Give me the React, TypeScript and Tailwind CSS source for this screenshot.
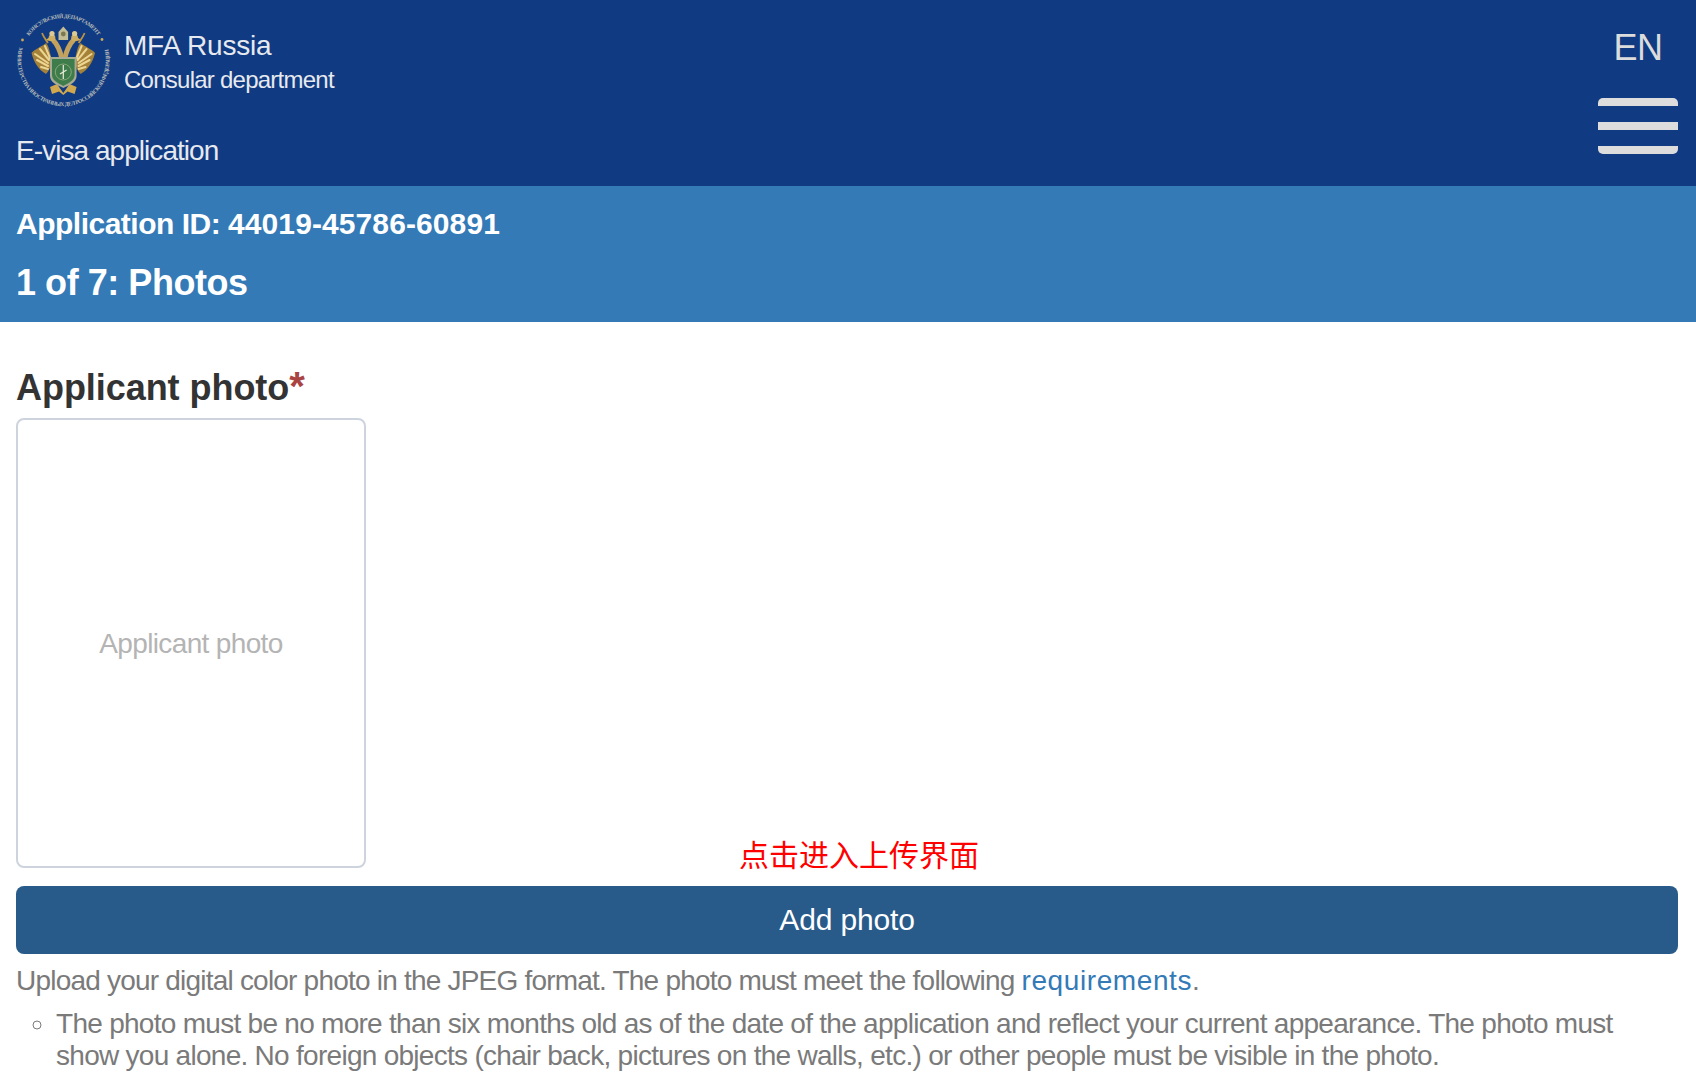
import { useId } from 'react'

const SANS = 'font-["Liberation_Sans","Noto_Sans_CJK_SC",sans-serif]'

// 鹰的左半边，右半边用镜像复用
function EagleHalf() {
  return (
    <g>
      <path d="M37 50 C35 40 34 34 31 31 C26 35 20 37 16.5 41 C19 51 24 58 31 62 C34 59 36 54 37 50 Z" fill="#a5823a" />
      <path d="M35 46 L30 34 M34 48 L25 37 M33 51 L20 42 M33 54 L22 48 M33 57 L26 55" stroke="#ecd592" strokeWidth="2" strokeLinecap="round" fill="none" />
      <path d="M47 47 C45 38 43 33 38 28" stroke="#c2a25c" strokeWidth="5" fill="none" />
      <circle cx="37" cy="26" r="3.4" fill="#cdae62" />
      <path d="M35 25 L30.5 28 L35 29 Z" fill="#cdae62" />
      <circle cx="37" cy="21.5" r="2.6" fill="#ddca92" />
      <path d="M27 21 C29 26 31 28 33 31" stroke="#bd9240" strokeWidth="1.8" fill="none" />
    </g>
  )
}

// 领事司徽章：外圈文字 + 双头鹰 + 绿色盾牌
function Emblem() {
  const id = useId()
  return (
    <svg viewBox="0 0 97 96" className="-ml-px w-[97px] h-[96px] shrink-0">
      <defs>
        <path id={`${id}t`} d="M14.1 23.9 A42 42 0 0 1 82.9 23.9" />
        <path id={`${id}b`} d="M4.3 35.3 A46 46 0 1 0 92.7 35.3" />
      </defs>
      <g fontSize="5.6" fill="#b4bbba" fontFamily="Liberation Serif, serif" fontWeight="700">
        <text>
          <textPath href={`#${id}t`} textLength="80">КОНСУЛЬСКИЙ ДЕПАРТАМЕНТ</textPath>
        </text>
        <text>
          <textPath href={`#${id}b`} textLength="168">МИНИСТЕРСТВА ИНОСТРАННЫХ ДЕЛ РОССИЙСКОЙ ФЕДЕРАЦИИ</textPath>
        </text>
      </g>
      <circle cx="7.5" cy="28" r="1.4" fill="#c9a85c" />
      <circle cx="87" cy="27.5" r="1.4" fill="#c9a85c" />
      <EagleHalf />
      <g transform="matrix(-1 0 0 1 96.6 0)">
        <EagleHalf />
      </g>
      {/* central crown */}
      <path d="M43.5 28 L43.5 20 L48.3 14.5 L53.1 20 L53.1 28 Z" fill="#c3bd95" />
      <circle cx="48.3" cy="22" r="2.4" fill="#7d7752" />
      {/* tail */}
      <path d="M35 75 L42 72 L48.3 81 L54.6 72 L61.6 75 L59.6 82 L52.6 79.5 L48.3 83 L44 79.5 L37 82 Z" fill="#cfa84f" />
      {/* shield */}
      <path d="M35 45 H61.6 V64 C61.6 70 55 73 48.3 76 C41.6 73 35 70 35 64 Z" fill="#a8aa92" />
      <path d="M37 47 H59.6 V63 C59.6 68 54 71 48.3 74 C42.6 71 37 68 37 63 Z" fill="#3f7c4b" />
      <circle cx="48.3" cy="60" r="8" fill="none" stroke="#86a878" strokeWidth="1" />
      <path d="M48.3 53 V67 M45 62 L51.6 58" stroke="#e8ecd8" strokeWidth="1.2" />
    </svg>
  )
}

export default function App() {
  return (
    <div className={`min-h-[1072px] bg-white overflow-hidden ${SANS}`}>
      {/* 顶部导航 */}
      <header className="h-[186px] bg-[#103a81] flex justify-between pl-4 pr-[18px]">
        <div>
          <div className="flex items-center gap-[12px] pt-[12px]">
            <Emblem />
            <div className="pt-[6px] text-[#e6e9ef]">
              <div className="text-[28px] leading-[34px] tracking-[-0.2px]">MFA Russia</div>
              <div className="text-[24px] leading-[34px] tracking-[-0.75px]">Consular department</div>
            </div>
          </div>
          <div className="mt-[27px] text-[28px] leading-[32px] tracking-[-0.95px] text-[#e6e9ef]">E-visa application</div>
        </div>
        <div className="flex flex-col items-center w-[80px]">
          <div className="mt-[28px] text-[36px] leading-[40px] tracking-[-0.5px] text-[#dcdcdc]">EN</div>
          <div className="mt-[30px] w-[80px] flex flex-col gap-[16px]">
            <span className="h-[8px] bg-[#dddddd] rounded-t-[5px]" />
            <span className="h-[8px] bg-[#dddddd]" />
            <span className="h-[8px] bg-[#dddddd] rounded-b-[5px]" />
          </div>
        </div>
      </header>

      {/* 申请编号 / 步骤 */}
      <section className="h-[136px] bg-[#337ab7] px-4 pt-[19px] text-white">
        <div className="text-[30px] leading-[38px] font-bold tracking-[-0.5px]">
          Application ID: <span className="tracking-[0.1px]">44019-45786-60891</span>
        </div>
        <div className="mt-[20px] text-[36px] leading-[40px] font-bold tracking-[-0.46px]">1 of 7: Photos</div>
      </section>

      <main className="pl-4 pr-[18px] relative">
        <h2 className="pt-[46px] text-[36px] leading-[40px] font-bold tracking-[-0.05px] text-[#333333]">
          Applicant photo<span className="text-[40px] leading-[0] text-[#a94442]">*</span>
        </h2>
        <div className="mt-[10px] w-[350px] h-[450px] pt-[2px] border-2 border-[#ced4de] rounded-[8px] flex items-center justify-center text-[28px] text-[#b4b4b4] tracking-[-0.65px]">
          Applicant photo
        </div>
        <span className="absolute left-[739px] top-[514px] text-[30px] leading-[40px] text-[#ff0000]">点击进入上传界面</span>
        <button className="mt-[18px] w-full h-[68px] pb-[2px] rounded-[8px] bg-[#285b8a] text-white text-[30px] tracking-[-0.15px]">Add photo</button>
        <p className="mt-[11px] text-[28px] leading-[32px] tracking-[-0.79px] text-[#7a7a7a]">
          Upload your digital color photo in the JPEG format. The photo must meet the following{' '}
          <a className="tracking-[0.6px] text-[#337ab7]">requirements</a>.
        </p>
        <ul className="mt-[11px] pl-[40px] text-[28px] leading-[32px] tracking-[-0.72px] text-[#7a7a7a] list-[circle]">
          <li>
            The photo must be no more than six months old as of the date of the application and reflect your current appearance. The photo must show you alone. No foreign objects (chair back, pictures on the walls, etc.) or other people must be visible in the photo.
          </li>
        </ul>
      </main>
    </div>
  )
}
